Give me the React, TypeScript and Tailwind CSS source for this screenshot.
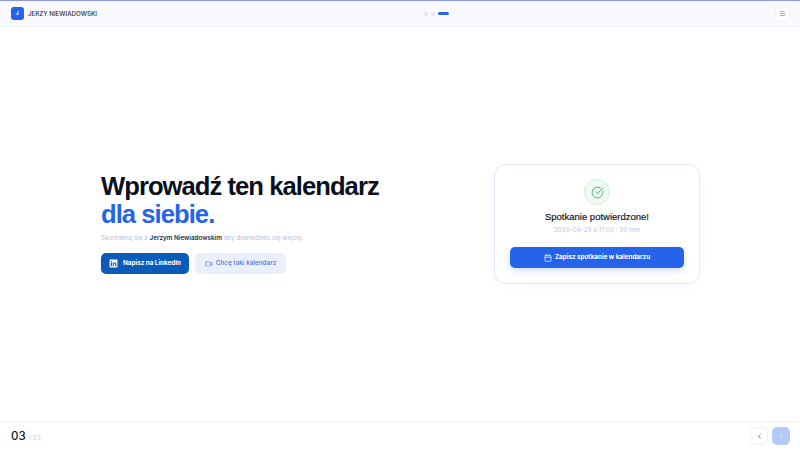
import { Calendar, ChevronLeft, ChevronRight, CircleCheckBig, Menu, Video } from "lucide-react"
import { FaLinkedin } from "react-icons/fa"

const body = "font-['Inter',sans-serif]"
const heading = "font-['Liberation_Sans',sans-serif]"

export default function App() {
  return (
    <div className={`flex h-[450px] w-[800px] flex-col overflow-hidden bg-white ${body}`}>
      <header className="flex h-[27px] shrink-0 items-center justify-between border-b border-[#eef2fb] border-t border-t-[#8f97e0] bg-[#f9faff] px-[11px]">
        <div className="flex items-center gap-[4.5px]">
          <div className="flex h-[13px] w-[12.5px] items-center justify-center rounded-[3px] bg-[#2563eb] text-[5px] font-bold text-white">
            J
          </div>
          <span className="text-[6.2px] font-medium text-[#2b2f3d]">JERZY NIEWIADOWSKI</span>
        </div>
        <div className="flex items-center gap-[3px]">
          <span className="h-[4px] w-[4px] rounded-full bg-[#e0e6fb]" />
          <span className="h-[4px] w-[4px] rounded-full bg-[#e0e6fb]" />
          <span className="h-[3px] w-[11px] rounded-full bg-[#2563eb]" />
        </div>
        <button className="flex h-[13px] w-[13px] items-center justify-center rounded-[3px] bg-white text-[#777] shadow-[0_0_2px_rgba(60,70,120,0.12)]">
          <Menu size={7} strokeWidth={2} />
        </button>
      </header>

      <main className="flex flex-1 items-center pl-[101px] pr-[100px]">
        <div className="mb-[2px] flex-1">
          <h1 className={`text-[25.6px] font-bold leading-[28px] tracking-[-0.95px] text-[#0b1020] ${heading}`}>
            Wprowadź ten kalendarz
            <br />
            <span className="text-[#2563eb]">dla siebie.</span>
          </h1>
          <p className="mt-[6px] text-[6.3px] leading-[8px] text-[#b8c0d8]">
            Skontaktuj się z <span className="font-semibold text-[#2b2f3d]">Jerzym Niewiadowskim</span> aby dowiedzieć się więcej.
          </p>
          <div className="mt-[11px] flex gap-[6px]">
            <button className="flex h-[21px] w-[88px] items-center justify-center gap-[5px] rounded-[5px] bg-[#0a5cb8] text-[6.3px] font-bold text-white">
              <FaLinkedin size={9} />
              Napisz na LinkedIn
            </button>
            <button className="flex h-[21px] w-[91px] items-center justify-center gap-[3px] rounded-[5px] bg-[#eaeffc] text-[6.4px] font-medium text-[#4f6fe0]">
              <Video size={8} strokeWidth={1.5} />
              Chcę taki kalendarz
            </button>
          </div>
        </div>

        <div className="flex h-[120px] w-[206px] shrink-0 flex-col items-center rounded-[12px] border border-[#e3e9fa] bg-white px-[15px] pt-[14px] shadow-[0_2px_8px_rgba(37,99,235,0.04)]">
          <div className="flex h-[26px] w-[26px] items-center justify-center rounded-full border border-[#c9f0d4] bg-[#effbf2] text-[#4f9d69]">
            <CircleCheckBig size={13} strokeWidth={1.6} />
          </div>
          <h2 className={`mt-[5px] text-[9.5px] leading-[14px] text-[#0b1020] [-webkit-text-stroke:0.15px_#0b1020] ${heading}`}>
            Spotkanie potwierdzone!
          </h2>
          <p className="text-[6.4px] leading-[12px] text-[#c0c7dc]">2026-04-29 o 11:00 · 30 min</p>
          <button className="mt-[11px] flex h-[21px] w-full items-center justify-center gap-[3px] rounded-[5px] bg-[#2563eb] text-[6.3px] font-bold text-white shadow-[0_3px_6px_rgba(37,99,235,0.2)]">
            <Calendar size={8} strokeWidth={2} />
            Zapisz spotkanie w kalendarzu
          </button>
        </div>
      </main>

      <footer className="flex h-[29px] shrink-0 items-center justify-between border-t border-[#f0f2fa] pl-[11px] pr-[10px]">
        <div className="mt-[1px] flex items-baseline gap-[3px]">
          <span className="text-[11.5px] font-medium text-[#12141c]">03</span>
          <span className="text-[6.3px] text-[#c0c9e4]">/ 03</span>
        </div>
        <div className="flex gap-[4px]">
          <button className="flex h-[18px] w-[18px] items-center justify-center rounded-[5px] border border-[#eef0f8] bg-white text-[#555]">
            <ChevronLeft size={7} strokeWidth={2.5} />
          </button>
          <button className="flex h-[18px] w-[18px] items-center justify-center rounded-[5px] bg-[#b3c9f8] text-[#e6edff]">
            <ChevronRight size={7} strokeWidth={2.5} />
          </button>
        </div>
      </footer>
    </div>
  )
}
